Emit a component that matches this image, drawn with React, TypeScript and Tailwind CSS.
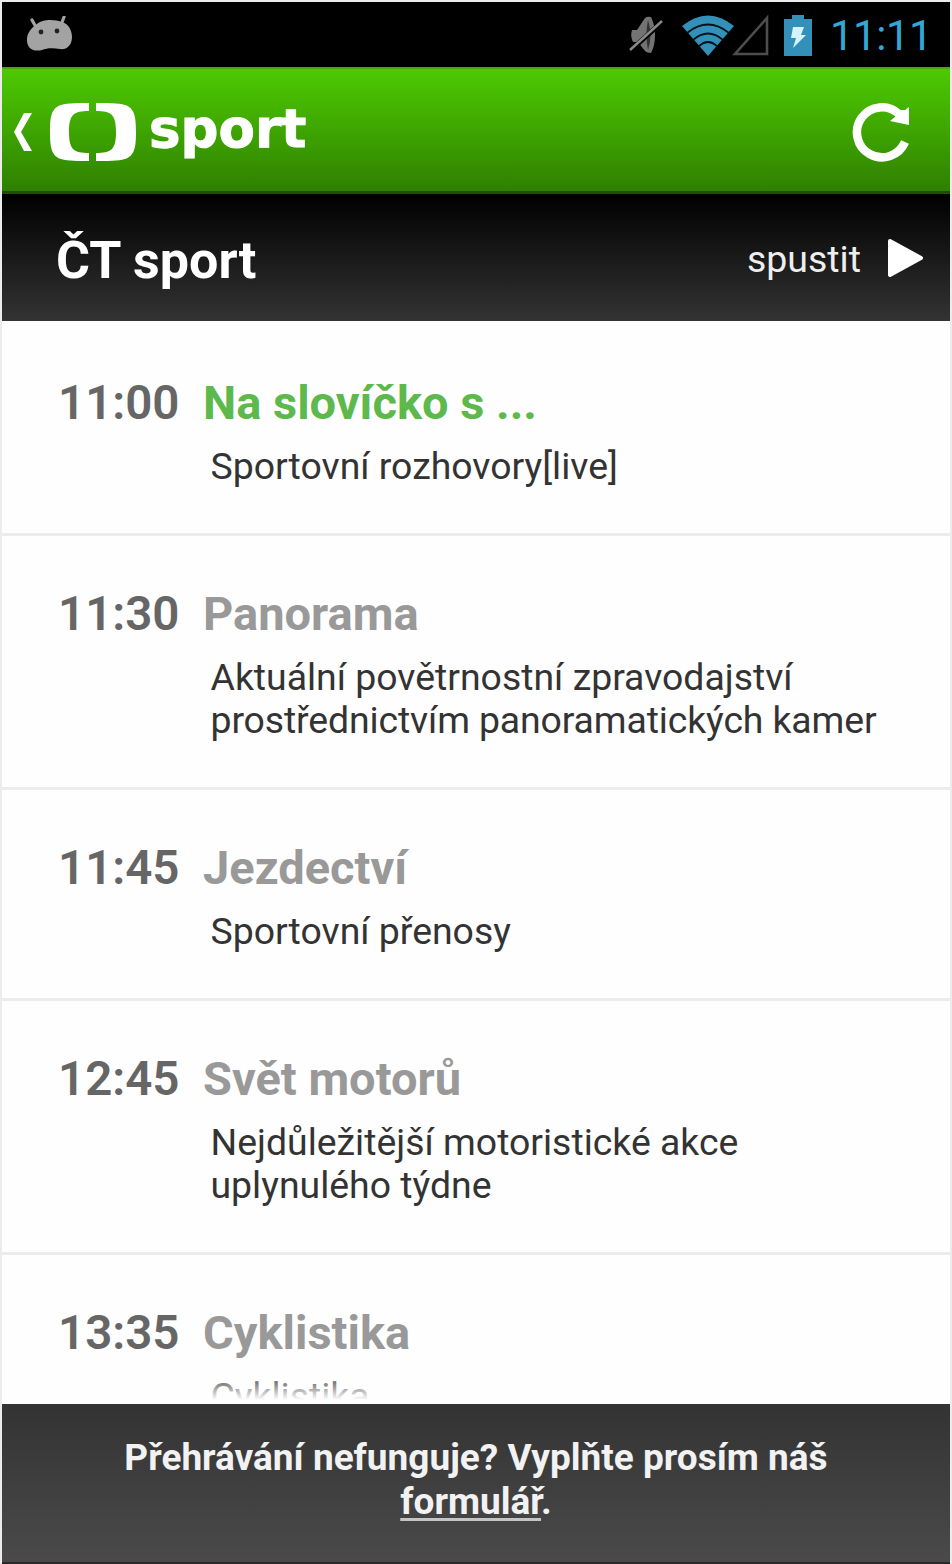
type Programme = {
  time: string
  title: string
  lines: string[]
  live?: boolean
}

const programmes: Programme[] = [
  { time: '11:00', title: 'Na slovíčko s ...', lines: ['Sportovní rozhovory[live]'], live: true },
  {
    time: '11:30',
    title: 'Panorama',
    lines: ['Aktuální povětrnostní zpravodajství', 'prostřednictvím panoramatických kamer'],
  },
  { time: '11:45', title: 'Jezdectví', lines: ['Sportovní přenosy'] },
  { time: '12:45', title: 'Svět motorů', lines: ['Nejdůležitější motoristické akce', 'uplynulého týdne'] },
  { time: '13:35', title: 'Cyklistika', lines: ['Cyklistika'] },
]

function StatusBar() {
  return (
    <div className="flex h-[65px] shrink-0 items-center bg-black pl-6 pr-[20px] pt-px">
      <svg width="48" height="38" viewBox="0 0 48 38" fill="#a3a3a3">
        <path d="M6 4l4 7M38 1l-3 8" stroke="#a3a3a3" strokeWidth="3.2" strokeLinecap="round" />
        <path d="M11 8C16 3 29 3 36 6C43 8 46 15 46 21C46 30 40 34 34 33C27 32 21 32 16 34C8 36 1 33 1 24C1 17 5 12 11 8Z" />
        <circle cx="15" cy="16" r="2.4" fill="#222" />
        <circle cx="31" cy="15" r="2.4" fill="#222" />
      </svg>

      <div className="ml-auto flex items-center">
        <svg width="36" height="40" viewBox="0 0 36 40">
          <path d="M4 15H9L17 3Q19 1 23 2Q27 10 27 20Q27 31 23 38Q19 38 17 36L10 27H5Q2 21 4 15Z" fill="#737373" />
          <path d="M20 5Q25 20 20 35Q17 20 20 5Z" fill="#333" />
          <path d="M2 36L34 7" stroke="#000" strokeWidth="5" />
          <path d="M2 35L34 6" stroke="#8a8a8a" strokeWidth="2.4" />
        </svg>
        <svg className="ml-[17px]" width="54" height="42" viewBox="0 0 54 42">
          <path d="M1 12Q27 -9 53 12L27 42Z" fill="#3390b8" />
          <path d="M6 19Q27 2 48 19M12 26Q27 13 42 26M18 32Q27 24 36 32" fill="none" stroke="#04121a" strokeWidth="1.8" />
        </svg>
        <svg className="-ml-[4px]" width="38" height="44" viewBox="0 0 38 44">
          <path d="M4 41H36V5Z" fill="none" stroke="#4d4d4d" strokeWidth="2.6" />
        </svg>
        <svg className="ml-[14px]" width="30" height="42" viewBox="0 0 30 42">
          <path d="M1 5H9V1H21V5H29V42H1Z" fill="#3390b8" />
          <path d="M10 13H21L18 21H23L10 34L13 24H8Z" fill="#d5f3ff" />
        </svg>
        <span className="ml-[17px] mt-px w-[100px] whitespace-nowrap text-[42px] leading-[60px] tracking-[-0.5px] text-[#33a8d8]">
          11:11
        </span>
      </div>
    </div>
  )
}

function BrandBar() {
  return (
    <header className="flex h-[127px] shrink-0 items-center border-b-[3px] border-t-2 border-b-[#1f5000] border-t-[#44aa0c] bg-linear-to-b/srgb from-[#4dca02] to-[#2f8000] pl-[10px] pr-[38px] pt-1">
      <svg width="22" height="40" viewBox="0 0 22 40">
        <path d="M12 1H20L9 20L20 39H12L2 20Z" fill="#fff" />
      </svg>
      <svg className="ml-[15px]" width="88" height="60" viewBox="0 0 88 60">
        <path d="M40 1V9C25 9 20 12 20 30C20 48 25 51 40 51V59C30 59 19 59 12 57C3 54 1 47 1 30C1 13 3 6 12 3C19 1 30 1 40 1Z" fill="#fff" />
        <path d="M47 1V9C62 9 67 12 67 30C67 48 62 51 47 51V59C58 59 69 59 76 57C85 54 87 47 87 30C87 13 85 6 76 3C69 1 58 1 47 1Z" fill="#fff" />
      </svg>
      <span className="-mt-1.5 ml-[12px] whitespace-nowrap font-['DejaVu_Sans'] text-[53px] font-bold leading-[70px] text-white [-webkit-text-stroke:1px_#fff]">
        sport
      </span>
      <svg className="ml-auto" width="60" height="62" viewBox="0 0 60 62">
        <path d="M53 41A25 25 0 1 1 47 13" fill="none" stroke="#fff" strokeWidth="8.5" />
        <path d="M57 6V24L38 20L43 16L46 9L53 9Z" fill="#fff" />
      </svg>
    </header>
  )
}

function ChannelBar() {
  return (
    <div className="flex h-[127px] shrink-0 items-center bg-linear-to-b/srgb from-black to-[#333] pl-[54px] pr-[26px] text-white">
      <h1 className="mt-[7px] whitespace-nowrap text-[52px] font-bold leading-[60px]">ČT sport</h1>
      <button className="ml-auto flex items-center">
        <span className="mt-[3px] whitespace-nowrap text-[37.5px] leading-[44px] text-[#eee]">spustit</span>
        <svg className="ml-[26px]" width="37" height="40" viewBox="0 0 37 40">
          <path d="M3 3L34 20L3 37Z" fill="#fff" stroke="#fff" strokeWidth="4" strokeLinejoin="round" />
        </svg>
      </button>
    </div>
  )
}

function ProgrammeRow({ time, title, lines, live }: Programme) {
  return (
    <li className="shrink-0 border-b-[3px] border-[#ececec] pb-[45px] pt-12">
      <div className="flex h-[60px] items-center text-[47px] font-bold leading-[60px]">
        <span className="ml-[56px] w-[145px] whitespace-nowrap text-[47.5px] font-semibold text-[#666]">{time}</span>
        <span className={live ? 'whitespace-nowrap text-[#5db94b]' : 'whitespace-nowrap text-[#999]'}>{title}</span>
      </div>
      <p className="ml-[208.5px] mt-3 text-[37.4px] leading-[43px] text-[#333]">
        {lines.map(line => (
          <span
            key={line}
            className={line.length > 36 ? 'block whitespace-nowrap tracking-[-0.12px]' : 'block whitespace-nowrap'}
          >
            {line}
          </span>
        ))}
      </p>
    </li>
  )
}

export default function App() {
  return (
    <div className="flex h-[1564px] w-[952px] flex-col overflow-hidden border-x-2 border-t-2 border-[#ececec] bg-[#fefefe] font-['Roboto',sans-serif]">
      <StatusBar />
      <BrandBar />
      <ChannelBar />

      <main className="relative flex-1 overflow-hidden">
        <ul className="flex flex-col pt-1">
          {programmes.map(p => (
            <ProgrammeRow key={p.time} {...p} />
          ))}
        </ul>
        {/* fade of the list where it slides under the footer */}
        <div className="absolute inset-x-0 bottom-0 h-7 bg-linear-to-b/srgb from-[#fefefe]/10 to-[#fefefe] to-85%" />
      </main>

      <footer className="h-[160px] shrink-0 border-b-2 border-[#2a2829] bg-linear-to-b/srgb from-[#333] to-[#4a4a4a] pt-[32px] text-center text-[37px] font-bold leading-[43.5px] text-[#f2f2f2]">
        <p className="whitespace-nowrap">Přehrávání nefunguje? Vyplňte prosím náš</p>
        <p>
          <a href="#formular" className="underline decoration-[#c4c4c4] decoration-[3px] underline-offset-[4px] [text-decoration-skip-ink:none]">formulář</a>.
        </p>
      </footer>
    </div>
  )
}
